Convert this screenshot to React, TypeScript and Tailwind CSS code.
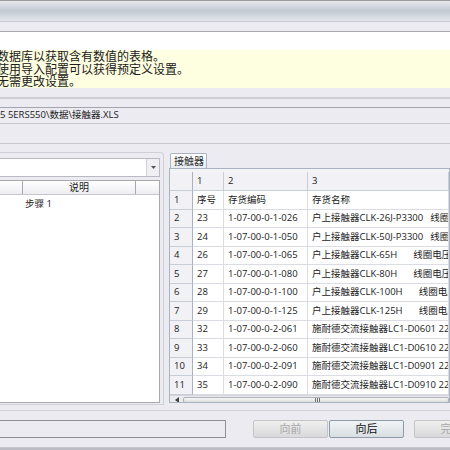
const FONT = { fontFamily: '"Open Sans", "Noto Sans CJK SC", sans-serif' };

type Row = { n: string; code: string; name: string; tail?: string; gap?: number };

const ROWS: Row[] = [
  { n: '序号', code: '存货编码', name: '存货名称' },
  { n: '23', code: '1-07-00-0-1-026', name: '户上接触器CLK-26J-P3300', tail: '线圈电压220V', gap: 7 },
  { n: '24', code: '1-07-00-0-1-050', name: '户上接触器CLK-50J-P3300', tail: '线圈电压220V', gap: 7 },
  { n: '26', code: '1-07-00-0-1-065', name: '户上接触器CLK-65H', tail: '线圈电压220V', gap: 16 },
  { n: '27', code: '1-07-00-0-1-080', name: '户上接触器CLK-80H', tail: '线圈电压220V', gap: 16 },
  { n: '28', code: '1-07-00-0-1-100', name: '户上接触器CLK-100H', tail: '线圈电压220V', gap: 16 },
  { n: '29', code: '1-07-00-0-1-125', name: '户上接触器CLK-125H', tail: '线圈电压220V', gap: 16 },
  { n: '32', code: '1-07-00-0-2-061', name: '施耐德交流接触器LC1-D0601 220V' },
  { n: '33', code: '1-07-00-0-2-060', name: '施耐德交流接触器LC1-D0610 220V' },
  { n: '34', code: '1-07-00-0-2-091', name: '施耐德交流接触器LC1-D0901 220V' },
  { n: '35', code: '1-07-00-0-2-090', name: '施耐德交流接触器LC1-D0910 220V' },
];

const hdr = 'bg-[#f2f2f6] border-r border-b border-[#c9cdd8] flex items-center pl-[4px] shrink-0';
const cell = 'bg-white border-r border-b border-[#dcdce4] flex items-center pl-[4px] shrink-0 whitespace-nowrap';

const DataGrid = () => (
  <div className="flex-1 border border-[#a9b2bf] bg-[#f4f4f7] flex flex-col overflow-hidden text-[9.5px] text-[#1b1b1b]">
    <div className="flex-1 pt-[3px] flex flex-col">
      <div className="flex h-[19px]">
        <div className={`${hdr} w-[23px] border-r-[#a9b2c2]`} />
        <div className={`${hdr} w-[31px]`}>1</div>
        <div className={`${hdr} w-[84px]`}>2</div>
        <div className={`${hdr} flex-1`}>3</div>
      </div>
      {ROWS.map((r, i) => (
        <div key={i} className="flex h-[18.5px]">
          <div className={`${hdr} w-[23px] border-r-[#a9b2c2]`}>{i + 1}</div>
          <div className={`${cell} w-[31px]`}>{r.n}</div>
          <div className={`${cell} w-[84px]`}>{r.code}</div>
          <div className={`${cell} flex-1 overflow-hidden`}>
            {r.name}
            {r.tail && <span style={{ marginLeft: r.gap }}>{r.tail}</span>}
          </div>
        </div>
      ))}
    </div>
    <div className="h-[11px] flex items-stretch bg-[#ebebef] border-t border-[#d4d4dc]">
      <div className="w-[13px] flex items-center justify-center">
        <svg width="4" height="6" viewBox="0 0 4 6"><path d="M4 0 L0 3 L4 6 Z" fill="#404040" /></svg>
      </div>
      <div className="flex-1 my-[1px] rounded-[2px] border border-[#b0b0b8] bg-gradient-to-b from-[#f8f8f8] to-[#dcdcdc] flex items-center pl-[131px]">
        <div className="flex gap-[1px]">
          <div className="w-[1px] h-[4px] bg-[#707070]" />
          <div className="w-[1px] h-[4px] bg-[#707070]" />
          <div className="w-[1px] h-[4px] bg-[#707070]" />
        </div>
      </div>
    </div>
  </div>
);

const Btn = ({ label, disabled }: { label: string; disabled?: boolean }) => (
  <div
    className={`w-[75px] shrink-0 h-[18px] flex items-center justify-center text-[11px] rounded-[2px] border bg-gradient-to-b ${
      disabled
        ? 'border-[#c4c4c8] from-[#f0f0f0] to-[#d9d9dc] text-[#a8a8a8]'
        : 'border-[#8c9aa8] from-[#f1f4f6] to-[#d9dee3] text-[#111]'
    }`}
  >
    {label}
  </div>
);

export default function App() {
  return (
    <div className="w-[450px] h-[450px] overflow-hidden bg-[#ecebf2] flex flex-col" style={FONT}>
      <div className="h-[21px] shrink-0 border-t border-[#9a9a9a] bg-gradient-to-b from-[#e6e8ed] via-[#c3c9d3] to-[#e4e6eb]" />
      <div className="h-[10px] shrink-0 border-t border-[#c9ccd6]" />
      <div className="h-[19px] shrink-0 bg-white border-t border-[#a9a9b1]" />
      <div className="h-[38px] shrink-0 bg-[#fefee1] pt-[1px] text-[12px] leading-[12.5px] text-[#202020] ml-[-3px] whitespace-nowrap">
        <div>数据库以获取含有数值的表格。</div>
        <div>使用导入配置可以获得预定义设置。</div>
        <div>无需更改设置。</div>
      </div>
      <div className="h-[9px] shrink-0" />
      <div className="h-[10px] shrink-0 border-t-2 border-[#cdcdd3]" />
      <div className="h-[17px] shrink-0 border-t border-b border-t-[#a4a4ac] border-b-[#c7c7cf] flex items-center text-[9.5px] text-[#1b1b1b] whitespace-nowrap">
        5 5ERS550\数据\接触器.XLS
      </div>
      <div className="h-[19px] shrink-0" />
      <div className="h-[9px] shrink-0 border-t border-[#c9c9d1]" />
      <div className="h-[253px] shrink-0 flex">
        <div className="w-[164px] shrink-0 border-t border-r border-b border-[#cfcfd7] rounded-tr-[4px] pt-[5px] pr-[3px] pb-[1px] flex flex-col">
          <div className="h-[19px] bg-white border border-l-0 border-[#b9b9c1] flex justify-end">
            <div className="w-[13px] bg-[#f0f0f3] border-l border-[#d0d0d6] flex items-center justify-center">
              <svg width="5" height="3" viewBox="0 0 5 3"><path d="M0 0 H5 L2.5 3 Z" fill="#555" /></svg>
            </div>
          </div>
          <div className="mt-[3px] flex-1 bg-white border border-l-0 border-[#a8a8b0] flex flex-col text-[9.5px] text-[#1b1b1b]">
            <div className="h-[14px] flex bg-gradient-to-b from-white to-[#eeeef2] border-b border-[#c5c5cd]">
              <div className="w-[23px] border-r border-[#a8a8b2]" />
              <div className="w-[113px] border-r border-[#a8a8b2] flex items-center justify-center text-[10px]">说明</div>
              <div className="flex-1" />
            </div>
            <div className="h-[18px] flex items-center pl-[25px]">步骤 1</div>
          </div>
        </div>
        <div className="w-[5px] shrink-0" />
        <div className="flex-1 min-w-0 flex flex-col pt-[1px] pb-[2px]">
          <div className="h-[15px] flex">
            <div className="ml-[1px] w-[37px] shrink-0 border border-b-0 border-[#aab4c0] rounded-t-[2px] bg-gradient-to-b from-white to-[#e6ecf2] text-[10px] text-[#303030] flex items-center pl-[3px]">
              接触器
            </div>
          </div>
          <DataGrid />
        </div>
      </div>
      <div className="h-[5px] shrink-0" />
      <div className="h-[10px] shrink-0 border-t border-[#d3d3db]" />
      <div className="h-[18px] shrink-0 flex items-stretch">
        <div className="w-[226px] shrink-0 border border-l-0 border-[#8e8e94]" />
        <div className="w-[27px] shrink-0" />
        <Btn label="向前" disabled />
        <div className="w-[1px] shrink-0" />
        <Btn label="向后" />
        <div className="w-[10px] shrink-0" />
        <Btn label="完成" disabled />
      </div>
      <div className="h-[9px] shrink-0" />
      <div className="flex-1 border-t border-[#c6c6ce] bg-[#bcbcc4]" />
    </div>
  );
}
